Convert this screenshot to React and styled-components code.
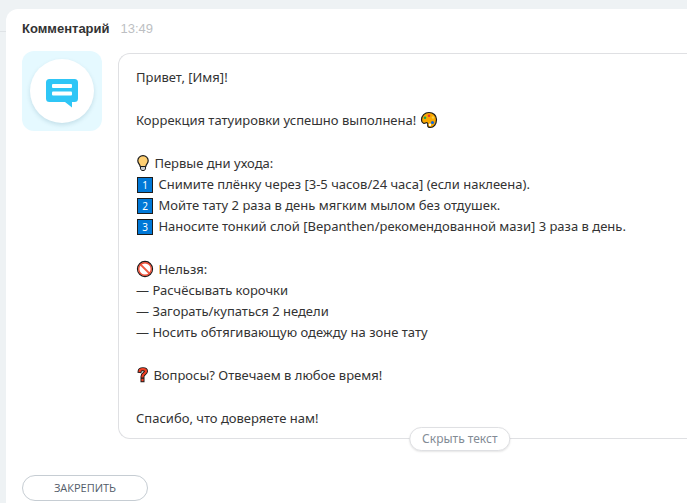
import React from "react";
import styled, { createGlobalStyle } from "styled-components";

const steps = [
  "Снимите плёнку через [3-5 часов/24 часа] (если наклеена).",
  "Мойте тату 2 раза в день мягким мылом без отдушек.",
  "Наносите тонкий слой [Bepanthen/рекомендованной мази] 3 раза в день.",
];

const forbidden = [
  "— Расчёсывать корочки",
  "— Загорать/купаться 2 недели",
  "— Носить обтягивающую одежду на зоне тату",
];

export default function App() {
  return (
    <>
      <GlobalStyle />
      <Timeline>
        <Connector />
        <Card>
          <Header>
            <Title>Комментарий</Title>
            <Time>13:49</Time>
          </Header>
          <Body>
            <Tile>
              <Circle>
                <CommentIcon />
              </Circle>
            </Tile>
            <Message>
              <P>Привет, [Имя]!</P>
              <P>
                Коррекция татуировки успешно выполнена! <Palette />
              </P>
              <div>
                <P>
                  <Bulb /> Первые дни ухода:
                </P>
                {steps.map((step, i) => (
                  <P key={step}>
                    <Keycap>{i + 1}</Keycap> {step}
                  </P>
                ))}
              </div>
              <div>
                <P>
                  <Prohibited /> Нельзя:
                </P>
                {forbidden.map((item) => (
                  <P key={item}>{item}</P>
                ))}
              </div>
              <P>
                <Question /> Вопросы? Отвечаем в любое время!
              </P>
              <P>Спасибо, что доверяете нам!</P>
              <Toggle type="button">Скрыть текст</Toggle>
            </Message>
          </Body>
          <PinButton type="button">ЗАКРЕПИТЬ</PinButton>
        </Card>
      </Timeline>
    </>
  );
}

function CommentIcon() {
  return (
    <svg width="32" height="29" viewBox="0 0 32 29" aria-hidden="true">
      <path
        fill="#2fc6f6"
        d="M3.500 0h25A3.500 3.500 0 0 1 32 3.500v16a3.500 3.500 0 0 1-3.500 3.500H26v5.500L19 23H3.500A3.500 3.500 0 0 1 0 19.500v-16A3.500 3.500 0 0 1 3.500 0z"
      />
      <rect x="6" y="5" width="20" height="4" rx="1" fill="#fff" />
      <rect x="6" y="12.500" width="20" height="4" rx="1" fill="#fff" />
    </svg>
  );
}

function Palette() {
  return (
    <Emoji width="18" height="18" viewBox="0 0 18 18" aria-hidden="true">
      <path
        fill="#f9a800"
        stroke="#1b1b1b"
        strokeWidth="1.200"
        d="M9 1.500c4.400 0 7.500 3 7.500 7 0 4.800-2.800 8-6.200 8-2.100 0-2.800-1-2.600-2.300.2-1.200.4-2.200-.6-2.500-1.200-.3-2.200 1.200-3.700.6C2.200 11.800 1.500 10.500 1.500 8.800 1.500 4.700 4.700 1.500 9 1.500z"
      />
      <circle cx="5" cy="6.800" r="1.300" fill="#16a34a" />
      <circle cx="9" cy="4.700" r="1.300" fill="#e6352b" />
      <circle cx="13" cy="6.500" r="1.200" fill="#f7d046" />
      <circle cx="12.500" cy="11.500" r="1.600" fill="#1668d8" />
      <circle cx="10" cy="13.800" r="1.200" fill="#fff" />
    </Emoji>
  );
}

function Bulb() {
  return (
    <Emoji width="14" height="18" viewBox="0 0 14 18" aria-hidden="true">
      <path
        fill="#ffd073"
        stroke="#1b1b1b"
        strokeWidth="1.200"
        d="M7 1.700a5.200 5 0 0 1 5.200 5c0 2.700-2.200 3.300-2.400 5.800H4.200C4 10 1.800 9.400 1.800 6.700A5.200 5 0 0 1 7 1.700z"
      />
      <path
        fill="#c9cdd0"
        stroke="#1b1b1b"
        d="M4.500 12.500h5v2.400L8.300 16.500H5.700l-1.200-1.600z"
      />
    </Emoji>
  );
}

function Prohibited() {
  return (
    <Emoji width="18" height="18" viewBox="0 0 18 18" aria-hidden="true">
      <circle cx="9" cy="9" r="6.500" fill="#fff" />
      <path d="M4.500 4.500l9 9" stroke="#ee5a43" strokeWidth="1.800" />
      <circle cx="9" cy="9" r="7.500" fill="none" stroke="#1b1b1b" strokeWidth="1.300" />
      <circle cx="9" cy="9" r="6.300" fill="none" stroke="#ee4a33" strokeWidth="1.400" />
    </Emoji>
  );
}

function Question() {
  return (
    <Emoji width="13" height="18" viewBox="0 0 13 18" aria-hidden="true">
      <path
        d="M3.700 5c.3-2.500 6.300-2.500 6.300.2 0 2.500-3.500 2.400-3.500 5.200M6.500 13.900v.3"
        fill="none"
        stroke="#1b1b1b"
        strokeWidth="4"
        strokeLinecap="square"
      />
      <path
        d="M3.700 5c.3-2.500 6.300-2.500 6.300.2 0 2.500-3.500 2.400-3.500 5.200M6.500 13.900v.3"
        fill="none"
        stroke="#ee3f24"
        strokeWidth="2.200"
        strokeLinecap="square"
      />
    </Emoji>
  );
}

const GlobalStyle = createGlobalStyle`
  body {
    margin: 0;
    background: #eef2f4;
  }
`;

const Timeline = styled.div`
  display: flex;
  min-height: 100vh;
  box-sizing: border-box;
  padding-top: 9px;
`;

const Connector = styled.div`
  width: 6px;
  height: 1px;
  margin-top: 22px;
  background: #dfe3e6;
`;

const Card = styled.section`
  flex: 1;
  min-width: 0;
  box-sizing: border-box;
  padding: 11px 0 0 16px;
  border-radius: 12px 0 0 0;
  background: #fff;
`;

const Header = styled.header`
  display: flex;
  gap: 11px;
  margin-bottom: 13px;
  font: 13px/18px "Liberation Sans", Arial, sans-serif;
`;

const Title = styled.span`
  font-weight: bold;
  color: #333;
`;

const Time = styled.time`
  color: #bdbfc3;
`;

const Body = styled.div`
  display: flex;
  align-items: flex-start;
  gap: 16px;
`;

const Tile = styled.div`
  display: flex;
  align-items: center;
  justify-content: center;
  width: 80px;
  height: 80px;
  flex-shrink: 0;
  border-radius: 12px;
  background: #e5f9ff;
`;

const Circle = styled.div`
  display: flex;
  align-items: center;
  justify-content: center;
  width: 64px;
  height: 64px;
  border-radius: 50%;
  background: #fff;
  box-shadow: 0 2px 4px rgba(0, 80, 110, 0.15);

  svg {
    margin-top: 4px;
  }
`;

const Message = styled.div`
  position: relative;
  flex: 1;
  min-width: 0;
  display: flex;
  flex-direction: column;
  gap: 22px;
  margin-top: 2px;
  padding: 13px 17px 9px;
  border: 1px solid #dfe0e3;
  border-right: 0;
  border-radius: 12px 0 0 12px;
  color: #333;
  font: 13px/21px "Noto Sans", "Segoe UI", sans-serif;
`;

const P = styled.p`
  height: 21px;
  margin: 0;
  white-space: nowrap;
`;

const Emoji = styled.svg`
  margin-right: 1px;
  vertical-align: -4px;
`;

const Keycap = styled.span`
  display: inline-block;
  box-sizing: border-box;
  width: 16px;
  height: 16px;
  margin: 0 2px 0 1px;
  border: 1px solid #1b1b1b;
  background: #0078d7;
  color: #fff;
  font-size: 10px;
  line-height: 14px;
  text-align: center;
`;

const Toggle = styled.button`
  position: absolute;
  bottom: -13px;
  left: 60%;
  height: 24px;
  padding: 0 12px;
  border: 1px solid #dfe0e3;
  border-radius: 12px;
  background: #fff;
  box-shadow: 0 1px 2px rgba(0, 0, 0, 0.1);
  color: #828b95;
  font: 12px/22px "Noto Sans", "Segoe UI", sans-serif;
  white-space: nowrap;
  transform: translateX(-50%);
`;

const PinButton = styled.button`
  display: block;
  width: 126px;
  height: 26px;
  margin-top: 36px;
  padding: 0;
  border: 1px solid #c6cdd3;
  border-radius: 13px;
  background: #fff;
  color: #535c69;
  font: 11px/24px "Open Sans", "Segoe UI", sans-serif;
`;
